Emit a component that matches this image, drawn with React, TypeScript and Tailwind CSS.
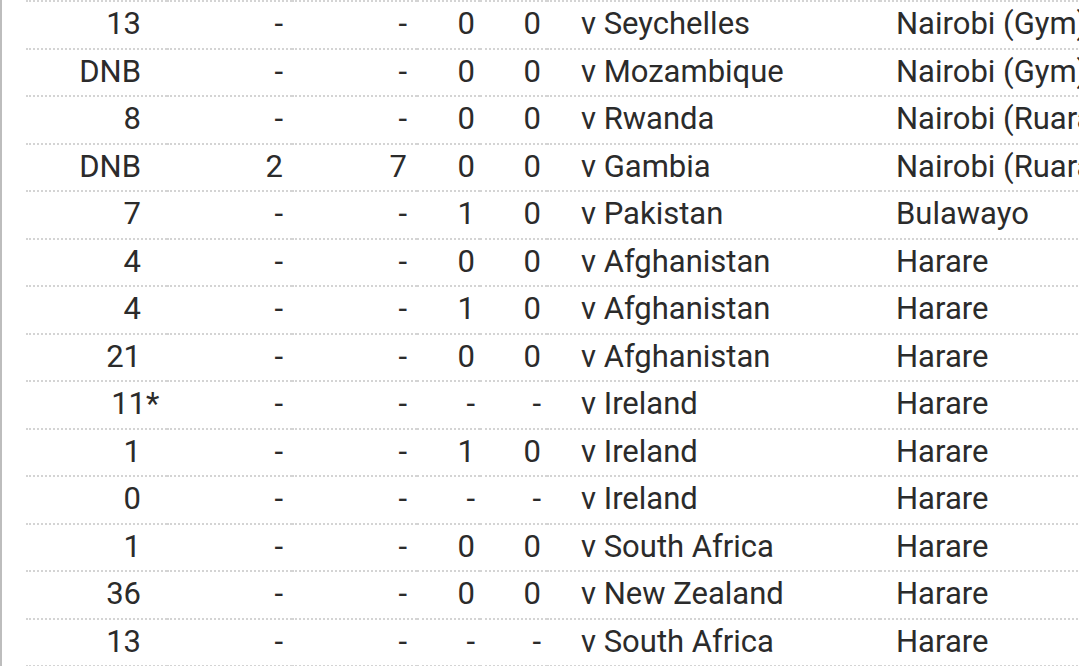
import React from "react";

type Row = [string, string, string, string, string, string, string];

const rows: Row[] = [
  ["13", "-", "-", "0", "0", "v Seychelles", "Nairobi (Gym)"],
  ["DNB", "-", "-", "0", "0", "v Mozambique", "Nairobi (Gym)"],
  ["8", "-", "-", "0", "0", "v Rwanda", "Nairobi (Ruaraka)"],
  ["DNB", "2", "7", "0", "0", "v Gambia", "Nairobi (Ruaraka)"],
  ["7", "-", "-", "1", "0", "v Pakistan", "Bulawayo"],
  ["4", "-", "-", "0", "0", "v Afghanistan", "Harare"],
  ["4", "-", "-", "1", "0", "v Afghanistan", "Harare"],
  ["21", "-", "-", "0", "0", "v Afghanistan", "Harare"],
  ["11*", "-", "-", "-", "-", "v Ireland", "Harare"],
  ["1", "-", "-", "1", "0", "v Ireland", "Harare"],
  ["0", "-", "-", "-", "-", "v Ireland", "Harare"],
  ["1", "-", "-", "0", "0", "v South Africa", "Harare"],
  ["36", "-", "-", "0", "0", "v New Zealand", "Harare"],
  ["13", "-", "-", "-", "-", "v South Africa", "Harare"],
];

const cell =
  "flex items-center h-full border-b-2 border-dotted border-[#d4d4d4] pb-[1px] whitespace-nowrap";

function Score({ v }: { v: string }) {
  if (v.endsWith("*")) {
    return (
      <span className="translate-x-[5px]">
        {v.slice(0, -1)}
        <span className="inline-block w-0">*</span>
      </span>
    );
  }
  return <span>{v}</span>;
}

export default function App() {
  return (
    <div
      className="flex h-[666px] w-[1079px] overflow-hidden bg-white text-[31px] text-[#2b2b2b]"
      style={{ fontFamily: "Roboto, 'Noto Sans', sans-serif" }}
    >
      <div className="w-[2px] shrink-0 bg-[#bdbdbd]" />
      <div className="ml-[24px] flex flex-col">
        <div className="flex h-[3px]">
          <div className="w-[141px] border-b-2 border-dotted border-[#d4d4d4]" />
          <div className="w-[125px] border-b-2 border-dotted border-[#d4d4d4]" />
          <div className="w-[125px] border-b-2 border-dotted border-[#d4d4d4]" />
          <div className="w-[63px] border-b-2 border-dotted border-[#d4d4d4]" />
          <div className="w-[67px] border-b-2 border-dotted border-[#d4d4d4]" />
          <div className="w-[333px] border-b-2 border-dotted border-[#d4d4d4]" />
          <div className="w-[250px] border-b-2 border-dotted border-[#d4d4d4]" />
        </div>
        {rows.map((r, i) => (
          <div key={i} className="flex h-[47.5px] shrink-0">
            <div className={`${cell} w-[141px] justify-end pr-[26px]`}>
              <Score v={r[0]} />
            </div>
            <div className={`${cell} w-[125px] justify-end pr-[9px]`}>{r[1]}</div>
            <div className={`${cell} w-[125px] justify-end pr-[10px]`}>{r[2]}</div>
            <div className={`${cell} w-[63px] justify-end pr-[5px]`}>{r[3]}</div>
            <div className={`${cell} w-[67px] justify-end pr-[6px]`}>{r[4]}</div>
            <div className={`${cell} w-[333px] pl-[34px]`}>{r[5]}</div>
            <div className={`${cell} w-[250px] pl-[16px]`}>{r[6]}</div>
          </div>
        ))}
      </div>
    </div>
  );
}
